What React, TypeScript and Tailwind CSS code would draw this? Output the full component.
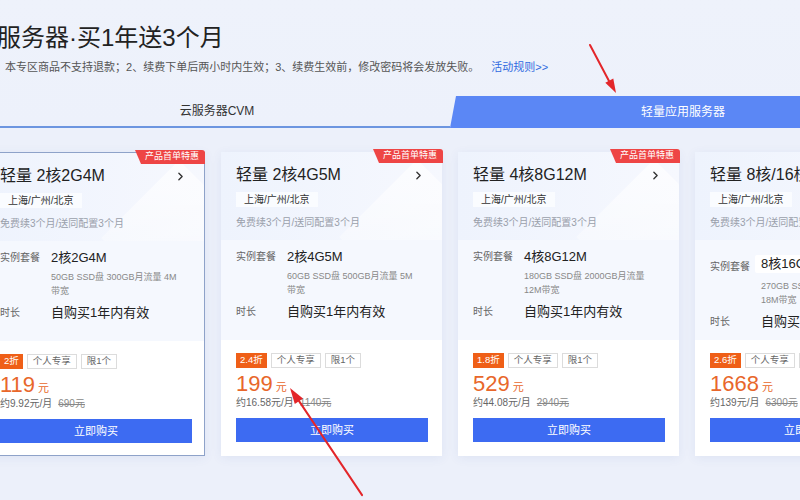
import React from 'react';
import { ChevronRight } from 'lucide-react';

type Card = {
  title: string;
  value: string;
  spec: string[];
  disc: string;
  price: string;
  month: string;
  old: string;
  selected?: boolean;
  boxed?: boolean;
};

const cards: Card[] = [
  { title: '轻量 2核2G4M', value: '2核2G4M', spec: ['50GB SSD盘 300GB月流量 4M', '带宽'], disc: '2折', price: '119', month: '约9.92元/月', old: '690元', selected: true },
  { title: '轻量 2核4G5M', value: '2核4G5M', spec: ['60GB SSD盘 500GB月流量 5M', '带宽'], disc: '2.4折', price: '199', month: '约16.58元/月', old: '1140元' },
  { title: '轻量 4核8G12M', value: '4核8G12M', spec: ['180GB SSD盘 2000GB月流量', '12M带宽'], disc: '1.8折', price: '529', month: '约44.08元/月', old: '2940元' },
  { title: '轻量 8核/16核32G18M', value: '8核16G18M', spec: ['270GB SSD盘 3500GB月流量', '18M带宽'], disc: '2.6折', price: '1668', month: '约139元/月', old: '6300元', boxed: true },
];

function ProductCard({ card }: { card: Card }) {
  return (
    <div
      className={`relative w-[221px] shrink-0 h-[304px] flex flex-col bg-white shadow-[0_2px_10px_rgba(60,90,160,0.08)] ${
        card.selected ? 'border border-[#8ea2c9]' : ''
      }`}
    >
      {/* top */}
      <div className="relative h-[88px] px-[15px] pt-[12px] overflow-hidden bg-gradient-to-r from-[#eef3fd] to-[#f6f8fe]">
        <div className="absolute right-[-30px] top-[30px] w-[110px] h-[110px] rotate-45 bg-gradient-to-br from-white/70 to-transparent" />
        <div className="relative flex items-center justify-between h-[22px]">
          <span className="text-[16px] text-[#222] whitespace-nowrap">{card.title}</span>
          <ChevronRight size={13} strokeWidth={2.5} className="text-[#333] mr-[2px]" />
        </div>
        <div className="relative mt-[6px] inline-flex items-center h-[15px] px-[8px] bg-[#fafcff] text-[10px] text-[#333]">
          上海/广州/北京
        </div>
        <div className="relative mt-[6px] text-[10px] leading-[14px] text-[#9aa0ab] whitespace-nowrap">
          免费续3个月/送同配置3个月
        </div>
      </div>

      {/* specs */}
      <div className={`h-[100px] px-[15px] bg-[#f5f8fe] overflow-hidden ${card.boxed ? 'pt-[15px]' : 'pt-[9px]'}`}>
        <div className="flex">
          <span className={`w-[51px] shrink-0 text-[10px] text-[#666] ${card.boxed ? 'leading-[20px] pt-[2px]' : 'leading-[16px]'}`}>实例套餐</span>
          <div className="flex flex-col">
            {card.boxed ? (
              <span className="inline-flex items-center h-[18px] px-[6px] -ml-[6px] bg-white rounded-[2px] text-[13px] text-[#222] whitespace-nowrap">{card.value}</span>
            ) : (
              <span className="text-[13px] leading-[16px] text-[#222] whitespace-nowrap">{card.value}</span>
            )}
            <div className={`${card.boxed ? 'mt-[6px]' : 'mt-[4px]'} text-[9px] leading-[14px] text-[#888]`}>
              {card.spec.map((s) => (
                <div key={s} className="whitespace-nowrap">{s}</div>
              ))}
            </div>
          </div>
        </div>
        <div className="flex mt-[7px]">
          <span className="w-[51px] shrink-0 text-[10px] leading-[16px] text-[#666]">时长</span>
          <span className="text-[13px] leading-[16px] text-[#222] whitespace-nowrap">自购买1年内有效</span>
        </div>
      </div>

      {/* bottom */}
      <div className="flex-1 bg-white px-[15px] pt-[13px]">
        <div className="flex items-center gap-[4px]">
          <span className="h-[15px] px-[4px] flex items-center bg-[#ef5f17] text-white text-[9.5px]">{card.disc}</span>
          <span className="h-[15px] px-[5px] flex items-center border border-[#dcdcdc] text-[#666] text-[9.5px]">个人专享</span>
          <span className="h-[15px] px-[5px] flex items-center border border-[#dcdcdc] text-[#666] text-[9.5px]">限1个</span>
        </div>
        <div className="mt-[4px] flex items-baseline text-[#e8672b]">
          <span className="text-[22px] leading-[24px]">{card.price}</span>
          <span className="ml-[3px] text-[11px]">元</span>
        </div>
        <div className="text-[10px] leading-[14px] text-[#666] whitespace-nowrap">
          {card.month}
          <span className="ml-[6px] line-through text-[#888]">{card.old}</span>
        </div>
        <button className="mt-[8px] w-[192px] h-[24px] bg-[#3d6bf2] text-white text-[11px] flex items-center justify-center">
          立即购买
        </button>
      </div>

      {/* badge */}
      <div className="absolute top-[-3px] right-[-1px] w-[70px] h-[14px] flex items-center justify-center pl-[4px] bg-[#ee4545] text-white text-[9px] rounded-tr-[3px] [clip-path:polygon(0_0,100%_0,100%_100%,6px_100%)]">
        产品首单特惠
      </div>
    </div>
  );
}

export default function App() {
  return (
    <div className="relative w-[800px] h-[500px] overflow-hidden bg-[#ecf0fa] font-['Liberation_Sans','Noto_Sans_CJK_SC',sans-serif]">
      <div className="h-[130px] bg-gradient-to-b from-[#eef2fb] to-[#edf1fb]">
        <div className="pt-[22px] -ml-[3px] text-[24px] leading-[32px] text-[#222] whitespace-nowrap">服务器·买1年送3个月</div>
        <div className="mt-[5px] flex items-center h-[16px] whitespace-nowrap">
          <span className="-ml-[12px] text-[11px] text-[#555]">
            1、本专区商品不支持退款；2、续费下单后两小时内生效；3、续费生效前，修改密码将会发放失败。
          </span>
          <span className="ml-[12px] text-[11px] text-[#2f6ae0]">活动规则&gt;&gt;</span>
        </div>

        {/* tabs */}
        <div className="mt-[21px] -ml-[16px] flex h-[32px] w-[932px]">
          <div className="w-[466px] flex items-center justify-center border-b-[2px] border-[#6d96e0] text-[12px] text-[#333]">
            云服务器CVM
          </div>
          <div className="w-[466px] flex items-center justify-center bg-[#5b87f5] text-white text-[12px] [clip-path:polygon(6px_0,100%_0,100%_100%,0_100%)]">
            轻量应用服务器
          </div>
        </div>
      </div>

      {/* cards */}
      <div className="mt-[22px] -ml-[16px] flex gap-[16px]">
        {cards.map((c) => (
          <ProductCard key={c.title} card={c} />
        ))}
      </div>

      {/* annotation arrows */}
      <svg className="absolute inset-0 pointer-events-none" width="800" height="500" viewBox="0 0 800 500">
        <line x1="590" y1="45" x2="609" y2="81" stroke="#e3262a" strokeWidth="2" strokeLinecap="round" />
        <polygon points="616,93 605.3,82.8 613.3,78.6" fill="#e3262a" />
        <line x1="362" y1="495" x2="299" y2="401" stroke="#e3262a" strokeWidth="2.2" strokeLinecap="round" />
        <polygon points="290,388 303,398.5 294.8,404.1" fill="#e3262a" />
      </svg>
    </div>
  );
}
